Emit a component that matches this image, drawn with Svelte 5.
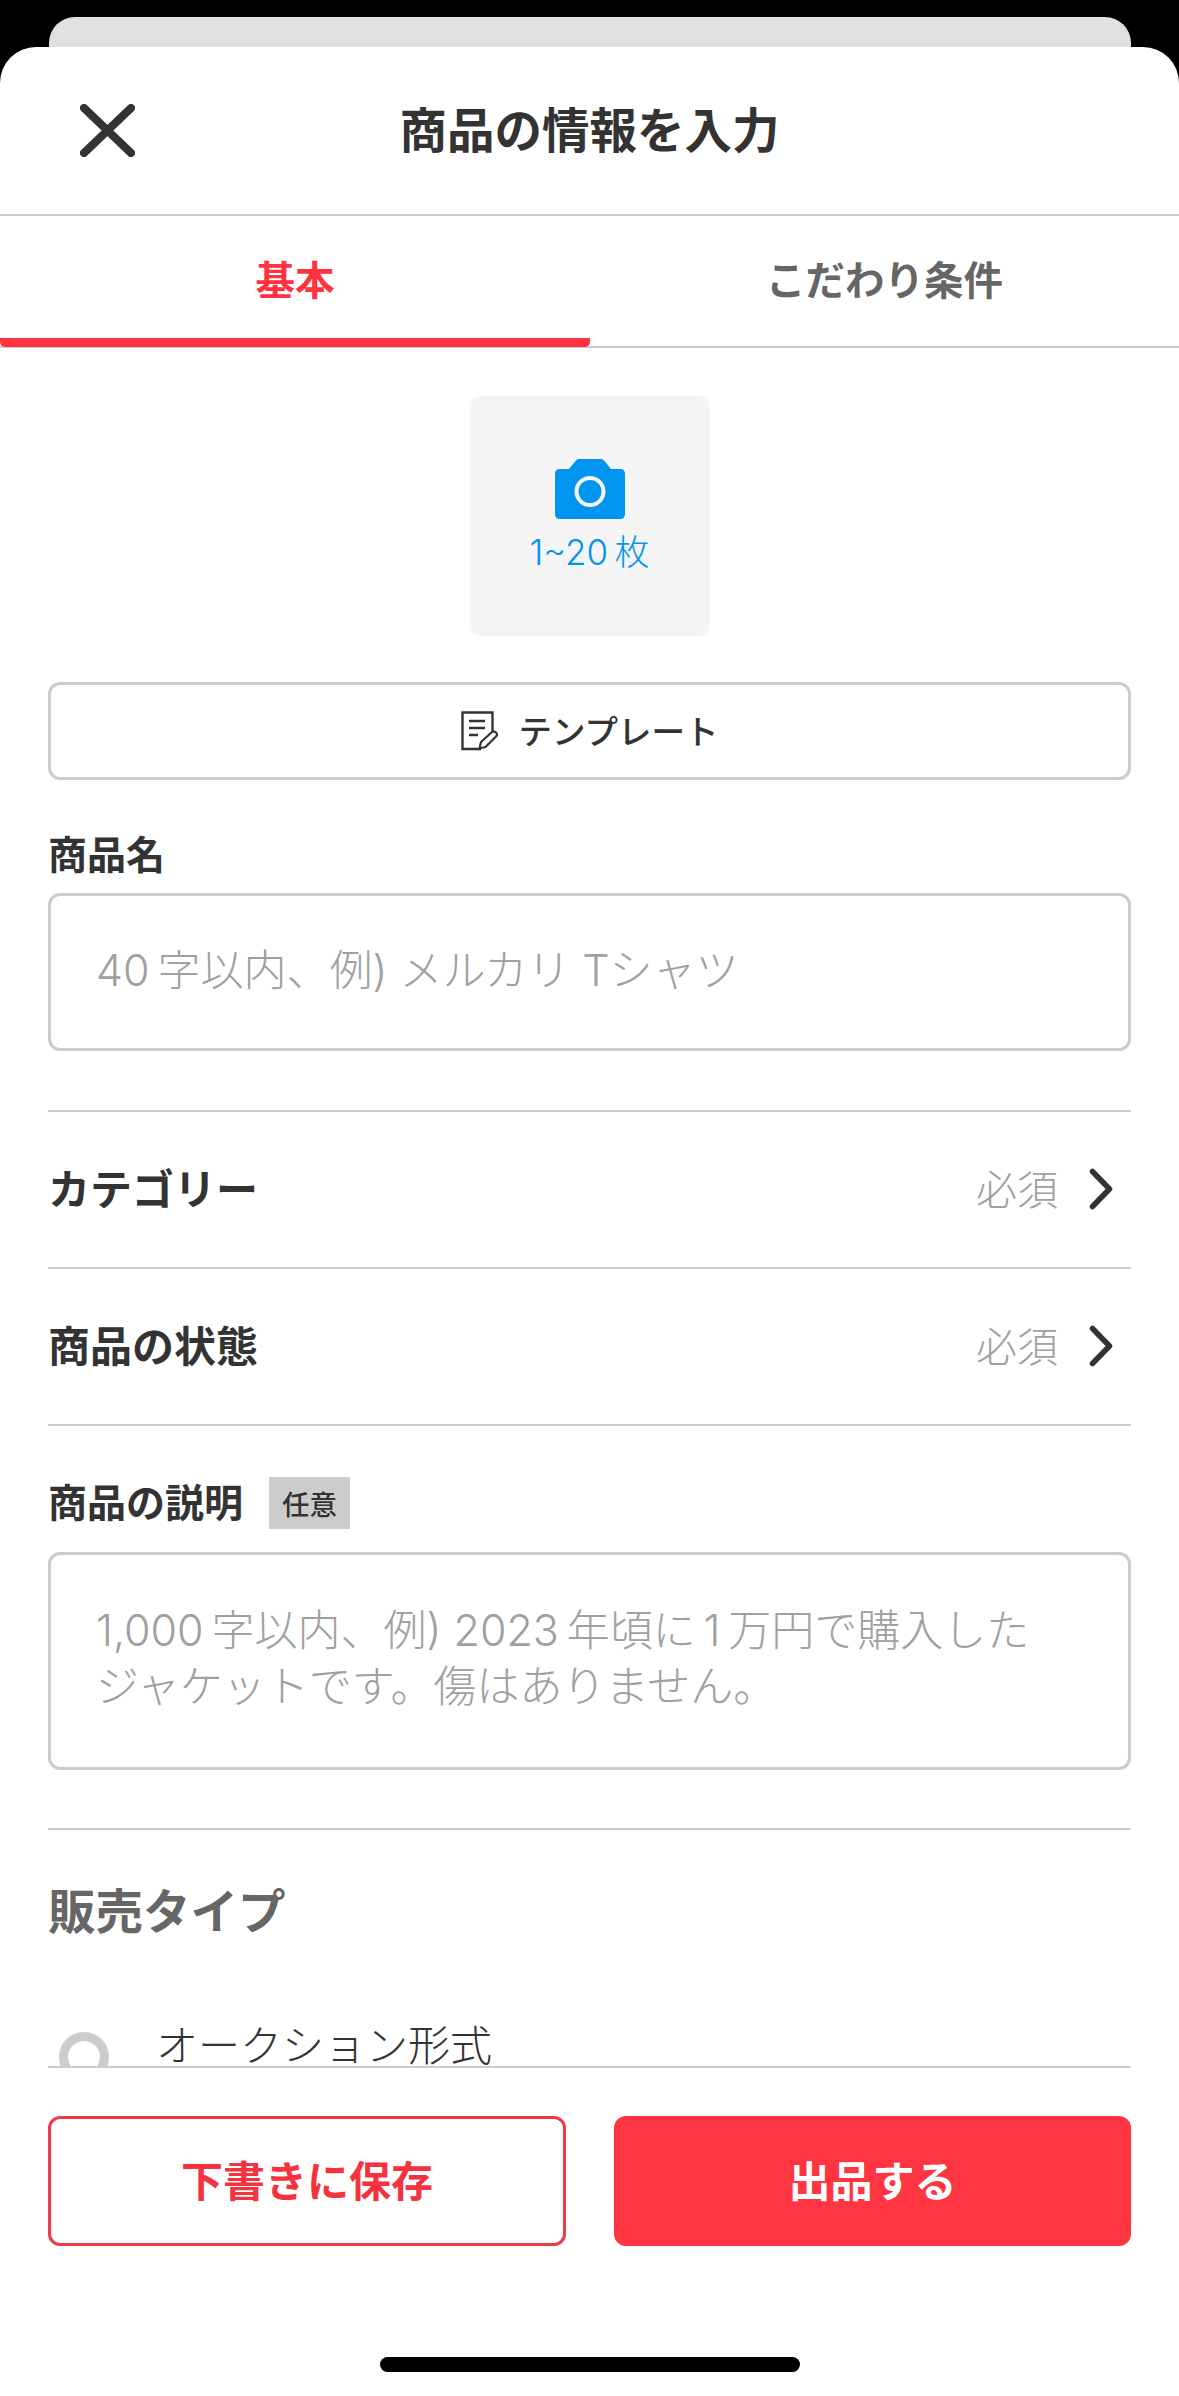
<script>
  const rows = [
    { label: 'カテゴリー' },
    { label: '商品の状態' }
  ];
</script>

<div class="screen">
  <div class="backcard"></div>
  <div class="sheet">
    <header class="head">
      <svg class="close" viewBox="0 0 55 53" width="55" height="53" aria-hidden="true">
        <path d="M4 4 L51 49 M51 4 L4 49" fill="none" stroke="#333" stroke-width="8" stroke-linecap="round" />
      </svg>
      <h1>商品の情報を入力</h1>
    </header>

    <nav class="tabs">
      <div class="tab active">基本</div>
      <div class="tab">こだわり条件</div>
    </nav>

    <main class="content">
      <div class="photo-wrap">
        <div class="photo">
          <svg viewBox="0 0 70 60" width="70" height="60" aria-hidden="true">
            <path fill="#0095ee" fill-rule="evenodd" d="M24 0 H46 Q48 0 49.500 2 L56 10 H65 Q70 10 70 15 V55 Q70 60 65 60 H5 Q0 60 0 55 V15 Q0 10 5 10 H14 L20.500 2 Q22 0 24 0 Z M35 17 A15.500 15.500 0 1 0 35 48 A15.500 15.500 0 1 0 35 17 Z M35 21 A11.500 11.500 0 1 1 35 44 A11.500 11.500 0 1 1 35 21 Z" />
          </svg>
          <span>1~20&#8201;枚</span>
        </div>
      </div>

      <div class="template">
        <svg viewBox="0 0 38 40" width="38" height="40" aria-hidden="true">
          <path d="M20 38 H1.500 V1.500 H31.500 V20" fill="none" stroke="#333" stroke-width="2.400" />
          <path d="M8 10 H24 M8 17 H24 M8 24 H17" fill="none" stroke="#333" stroke-width="2.400" />
          <path d="M18.500 37.500 L20 31 L31 21 Q33 19.500 35 21.500 Q37 23.500 35 25.500 L24.500 36 Z" fill="none" stroke="#333" stroke-width="2.200" stroke-linejoin="round" />
        </svg>
        <span class="template-text">テンプレート</span>
      </div>

      <div class="field-label name-label">商品名</div>
      <div class="input name-input">40&#8201;字以内、例) メルカリ Tシャツ</div>

      {#each rows as row}
        <div class="row">
          <span class="row-label">{row.label}</span>
          <span class="row-value">必須</span>
          <svg class="chev" viewBox="0 0 24 42" width="24" height="42" aria-hidden="true">
            <path d="M3.500 3.500 L20.500 21 L3.500 38.500" fill="none" stroke="#333" stroke-width="5.500" stroke-linecap="round" stroke-linejoin="round" />
          </svg>
        </div>
      {/each}

      <div class="desc-section">
        <div class="desc-head">
          <span class="field-label">商品の説明</span>
          <span class="tag">任意</span>
        </div>
        <div class="input desc-input">1,000&#8201;字以内、例) 2023&#8201;年頃に&#8201;1&#8201;万円で購入した<br />ジャケットです。傷はありません。</div>
      </div>

      <div class="sale">
        <h2>販売タイプ</h2>
        <div class="radio-row">
          <span class="radio"></span>
          <span class="radio-label">オークション形式</span>
        </div>
      </div>
    </main>

    <footer class="foot">
      <div class="btn outline"><span>下書きに保存</span></div>
      <div class="btn solid"><span>出品する</span></div>
    </footer>

    <div class="home-wrap"><div class="home"></div></div>
  </div>
</div>

<style>
  :global(body) {
    margin: 0;
    background: #000;
  }
  .screen {
    width: 1179px;
    height: 2396px;
    display: flex;
    flex-direction: column;
    overflow: hidden;
    padding-top: 17px;
    box-sizing: border-box;
    font-family: "Noto Sans CJK JP", "Noto Sans", sans-serif;
    color: #333;
  }
  .backcard {
    flex: none;
    height: 30px;
    margin: 0 48px 0 49px;
    background: #e0e0e0;
    border-radius: 26px 26px 0 0;
  }
  .sheet {
    flex: 1;
    min-height: 0;
    display: flex;
    flex-direction: column;
    background: #fff;
    border-radius: 36px 36px 0 0;
  }
  .head {
    flex: none;
    position: relative;
    height: 169px;
    box-sizing: border-box;
    border-bottom: 2px solid #ccc;
    display: flex;
    align-items: flex-start;
    justify-content: center;
  }
  .close {
    position: absolute;
    left: 80px;
    top: 57px;
  }
  h1 {
    margin: 48px 0 0;
    font-size: 47.500px;
    line-height: 66px;
    font-weight: 700;
  }
  .tabs {
    flex: none;
    height: 132px;
    box-sizing: border-box;
    display: grid;
    grid-template-columns: 590px 1fr;
    border-bottom: 2px solid #ccc;
  }
  .tab {
    text-align: center;
    font-size: 39.500px;
    font-weight: 700;
    line-height: 56px;
    padding-top: 34px;
    color: #666;
  }
  .tab.active {
    color: #ff333f;
    height: 131px;
    box-sizing: border-box;
    border-bottom: 9px solid #ff333f;
    border-radius: 0 0 5px 5px;
  }
  .content {
    flex: 1;
    min-height: 0;
    padding: 48px 48px 0;
  }
  .photo-wrap {
    display: flex;
    justify-content: center;
  }
  .photo {
    width: 240px;
    height: 240px;
    background: #f5f5f5;
    border-radius: 9px;
    display: flex;
    flex-direction: column;
    align-items: center;
    padding-top: 63px;
    box-sizing: border-box;
    color: #0095ee;
    font-family: Inter, "Noto Sans CJK JP", sans-serif;
    font-size: 35px;
    font-weight: 300;
    line-height: 50px;
  }
  .photo span {
    margin-top: 8px;
  }
  .template {
    margin-top: 46px;
    height: 98px;
    box-sizing: border-box;
    border: 3px solid #ccc;
    border-radius: 12px;
    display: flex;
    align-items: center;
    justify-content: center;
    gap: 20px;
    font-size: 33.500px;
    font-weight: 500;
  }
  .template-text {
    padding-bottom: 3px;
  }
  .field-label {
    font-size: 39px;
    font-weight: 700;
    line-height: 56px;
  }
  .name-label {
    margin-top: 44px;
  }
  .input {
    box-sizing: border-box;
    border: 3px solid #ccc;
    border-radius: 12px;
    color: #a0a0a0;
    font-family: Inter, "Noto Sans CJK JP", sans-serif;
    font-size: 43px;
    font-weight: 300;
    padding-left: 45px;
  }
  .name-input {
    margin-top: 13px;
    height: 158px;
    line-height: 148px;
  }
  .row {
    display: flex;
    align-items: center;
    height: 157px;
    box-sizing: border-box;
    border-bottom: 2px solid #ccc;
    padding-right: 18px;
    padding-bottom: 6px;
  }
  .name-input + .row {
    margin-top: 59px;
    border-top: 2px solid #ccc;
    height: 159px;
  }
  .row-label {
    flex: 1;
    font-size: 42px;
    font-weight: 700;
  }
  .row-value {
    font-size: 41px;
    font-weight: 300;
    color: #a0a0a0;
    margin-right: 31px;
  }
  .chev {
    margin-top: 4px;
  }
  .desc-section {
    padding-top: 51px;
  }
  .desc-head {
    display: flex;
    align-items: center;
    gap: 26px;
    height: 52px;
  }
  .desc-head .field-label {
    padding-bottom: 6px;
  }
  .tag {
    background: #ccc;
    width: 81px;
    height: 52px;
    display: flex;
    align-items: center;
    justify-content: center;
    font-size: 27.500px;
    font-weight: 500;
  }
  .desc-input {
    margin-top: 23px;
    height: 218px;
    line-height: 56px;
    padding-top: 47px;
  }
  .sale {
    margin-top: 58px;
    border-top: 2px solid #ccc;
  }
  h2 {
    margin: 46px 0 0;
    font-size: 47.500px;
    font-weight: 700;
    line-height: 66px;
    color: #666;
  }
  .radio-row {
    display: flex;
    align-items: flex-start;
    margin-top: 72px;
    padding-left: 11px;
  }
  .radio {
    flex: none;
    width: 50px;
    height: 50px;
    box-sizing: border-box;
    border: 9px solid #ccc;
    border-radius: 50%;
    margin-top: 18px;
  }
  .radio-label {
    margin: 7px 0 0 47px;
    font-size: 42px;
    font-weight: 300;
    line-height: 44px;
  }
  .foot {
    flex: none;
    position: relative;
    z-index: 1;
    background: #fff;
    margin: 0 48px;
    border-top: 2px solid #ccc;
    padding-top: 48px;
    display: grid;
    grid-template-columns: 518px 517px;
    column-gap: 48px;
  }
  .btn {
    height: 130px;
    box-sizing: border-box;
    border-radius: 12px;
    display: flex;
    align-items: center;
    justify-content: center;
    font-size: 42px;
    font-weight: 700;
    padding-bottom: 6px;
  }
  .outline {
    border: 3px solid #f0394a;
    color: #f5333f;
  }
  .solid {
    background: #ff3542;
    color: #fff;
  }
  .home-wrap {
    flex: none;
    height: 150px;
    display: flex;
    justify-content: center;
    padding-top: 111px;
    box-sizing: border-box;
  }
  .home {
    width: 420px;
    height: 15px;
    border-radius: 8px;
    background: #000;
  }
</style>
